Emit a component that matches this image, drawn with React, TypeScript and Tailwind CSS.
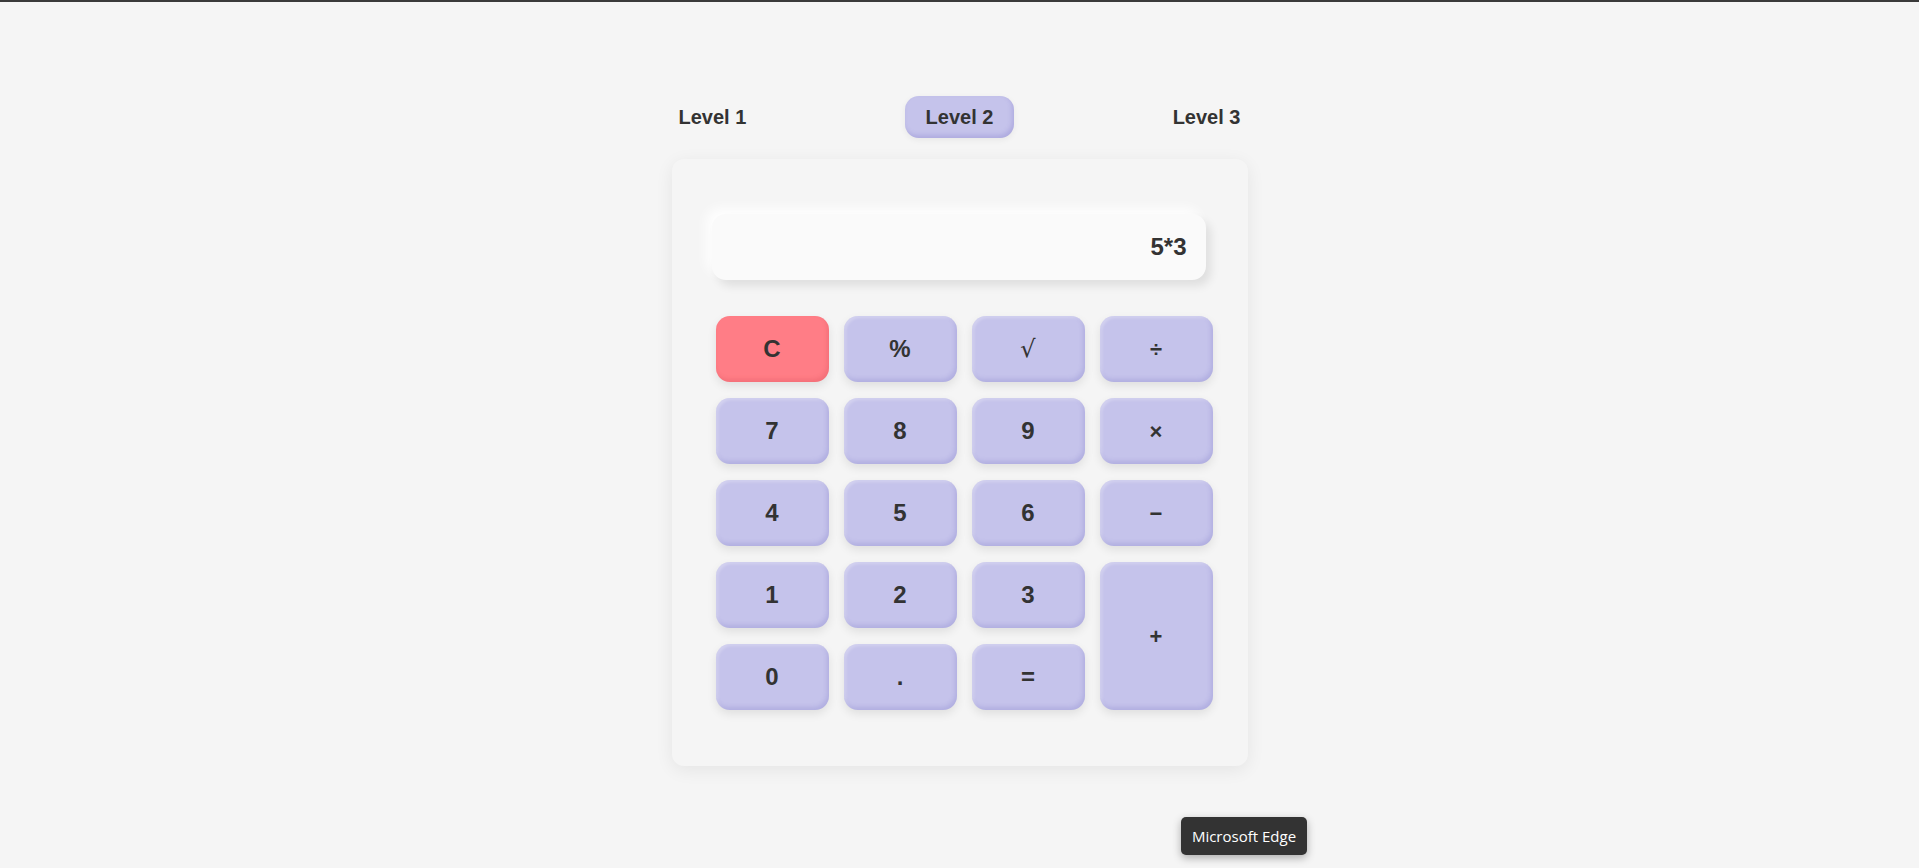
import { useState } from "react";

const KEY =
  "flex items-center justify-center rounded-[14px] h-[66px] text-[24px] font-bold text-[#333] bg-[#c5c3eb] shadow-[0_4px_10px_rgba(0,0,0,0.09),inset_-2px_-3px_4px_rgba(110,105,190,0.22),inset_2px_2px_3px_rgba(255,255,255,0.25)]";

const keys: { label: string; cls?: string }[] = [
  { label: "C", cls: "!bg-[#ff7d86] shadow-[0_4px_10px_rgba(0,0,0,0.09),inset_-2px_-3px_4px_rgba(200,60,70,0.2)]" },
  { label: "%" },
  { label: "√", cls: "!font-normal font-['DejaVu_Serif',serif]" },
  { label: "÷", cls: "!text-[22px]" },
  { label: "7" },
  { label: "8" },
  { label: "9" },
  { label: "×", cls: "!text-[22px]" },
  { label: "4" },
  { label: "5" },
  { label: "6" },
  { label: "−", cls: "!text-[22px]" },
  { label: "1" },
  { label: "2" },
  { label: "3" },
  { label: "+", cls: "row-span-2 !h-[148px] !text-[22px]" },
  { label: "0" },
  { label: "." },
  { label: "=" },
];

export default function App() {
  const [level, setLevel] = useState(2);
  const [expr] = useState("5*3");

  return (
    <div className="relative min-h-screen bg-[#f5f5f5] font-['Liberation_Sans',Arial,sans-serif]">
      <div className="h-[2px] bg-[#3a3a3a]" />

      <div className="mx-auto w-[576px] pt-[94px]">
        {/* level tabs */}
        <div className="flex items-center justify-between h-[42px]">
          {[1, 2, 3].map((n) => (
            <button
              key={n}
              onClick={() => setLevel(n)}
              className={`text-[20px] font-bold text-[#333] leading-[22px] rounded-[14px] ${
                level === n
                  ? "px-[21px] py-[10px] bg-[#c5c3eb] shadow-[inset_-2px_-3px_4px_rgba(110,105,190,0.25),0_2px_6px_rgba(0,0,0,0.06)]"
                  : "px-[7px] py-[10px]"
              }`}
            >
              Level {n}
            </button>
          ))}
        </div>

        {/* calculator */}
        <div className="mt-[21px] rounded-[12px] bg-[#f5f5f5] px-10 pt-[55px] pb-[56px] shadow-[0_4px_18px_rgba(0,0,0,0.07)]">
          <div className="flex h-[66px] w-[494px] items-center justify-end rounded-[14px] bg-[#fafafa] pr-[19px] text-[24px] font-bold text-[#333] shadow-[5px_6px_10px_rgba(0,0,0,0.09),-6px_-6px_12px_rgba(255,255,255,0.9)]">
            {expr}
          </div>

          <div className="mt-[36px] ml-[4px] grid w-[497px] grid-cols-4 gap-x-[15px] gap-y-[16px]">
            {keys.map((k) => (
              <button key={k.label} className={`${KEY} ${k.cls ?? ""}`}>
                {k.label}
              </button>
            ))}
          </div>
        </div>
      </div>

      {/* browser tooltip */}
      <div className="absolute left-[1181px] top-[817px] flex h-[38px] w-[126px] items-center justify-center rounded-[5px] bg-[#333] text-[15px] text-white shadow-[0_3px_8px_rgba(0,0,0,0.3)] font-['Open_Sans',sans-serif]">
        Microsoft Edge
      </div>
    </div>
  );
}
